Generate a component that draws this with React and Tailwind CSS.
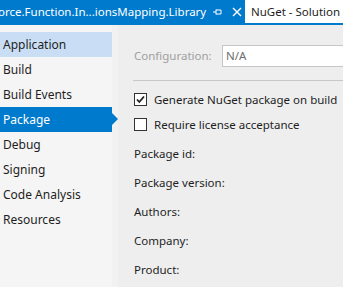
import React from "react";

const font = { fontFamily: '"Noto Sans", "Open Sans", sans-serif' };

function Check({ checked }) {
  return (
    <div className="w-[13px] h-[13px] border border-[#333] bg-white flex items-center justify-center shrink-0">
      {checked && (
        <svg width="11" height="11" viewBox="0 0 11 11">
          <path d="M2 5.5 L4.3 8 L9 2.5" fill="none" stroke="#1e1e1e" strokeWidth="1.8" />
        </svg>
      )}
    </div>
  );
}

export default function App() {
  const items = ["Application", "Build", "Build Events", "Package", "Debug", "Signing", "Code Analysis", "Resources"];
  return (
    <div className="w-[343px] h-[287px] overflow-hidden bg-[#eeeef2] text-[11.5px] text-[#1e1e1e] flex flex-col" style={font}>
      <div className="h-[23px] flex shrink-0 bg-[#eeeef2]">
        <div className="w-[245px] bg-[#007acc] text-white flex items-center whitespace-nowrap overflow-hidden">
          <span className="ml-[-2px] text-[11.5px]">orce.Function.In...ionsMapping.Library</span>
          <svg className="ml-[6px] shrink-0" width="10" height="10" viewBox="0 0 10 10">
            <path d="M1 5 H4 M4 2.5 V7.5 M4 3 H9 V7 H4" fill="none" stroke="white" strokeWidth="1" />
          </svg>
          <svg className="ml-[10px] shrink-0" width="10" height="10" viewBox="0 0 10 10">
            <path d="M1 1 L9 9 M9 1 L1 9" stroke="white" strokeWidth="1.4" />
          </svg>
        </div>
        <div className="flex-1 bg-white flex items-center pl-[6px] text-[11.5px] whitespace-nowrap">NuGet - Solution</div>
      </div>
      <div className="h-[2px] bg-[#007acc] shrink-0" />
      <div className="flex flex-1">
        <div className="w-[112px] bg-[#f5f5f5] pt-[7px] flex flex-col">
          {items.map((it) => (
            <div
              key={it}
              className={
                "relative h-[25px] flex items-center pl-[3px] text-[12px] " +
                (it === "Application" ? "bg-[#c9def5]" : it === "Package" ? "bg-[#007acc] text-white" : "")
              }
            >
              {it}
              {it === "Package" && (
                <div className="absolute right-[-6px] top-[6px] w-0 h-0 border-t-[6px] border-b-[6px] border-l-[6px] border-t-transparent border-b-transparent border-l-[#007acc]" />
              )}
            </div>
          ))}
        </div>
        <div className="w-[6px] bg-[#f1f1f1]" />
        <div className="flex-1 bg-[#eeeeee] pl-[16px] pt-[20px] flex flex-col">
          <div className="flex items-center h-[22px]">
            <span className="text-[#a0a0a0] w-[88px]">Configuration:</span>
            <div className="flex-1 h-[22px] bg-white border border-[#c6c6c6] border-r-0 flex items-center pl-[3px] text-[#6d6d6d]">N/A</div>
          </div>
          <div className="h-px bg-[#c8c8c8] mt-[13px] ml-[-1px]" />
          <div className="flex items-center gap-[7px] mt-[6px] h-[25px]">
            <Check checked />
            <span className="whitespace-nowrap">Generate NuGet package on build</span>
          </div>
          <div className="flex items-center gap-[7px] h-[25px]">
            <Check />
            <span className="whitespace-nowrap">Require license acceptance</span>
          </div>
          <div className="flex flex-col mt-[2px]">
            {["Package id:", "Package version:", "Authors:", "Company:", "Product:"].map((l) => (
              <div key={l} className="h-[29px] flex items-center">{l}</div>
            ))}
          </div>
        </div>
      </div>
    </div>
  );
}
